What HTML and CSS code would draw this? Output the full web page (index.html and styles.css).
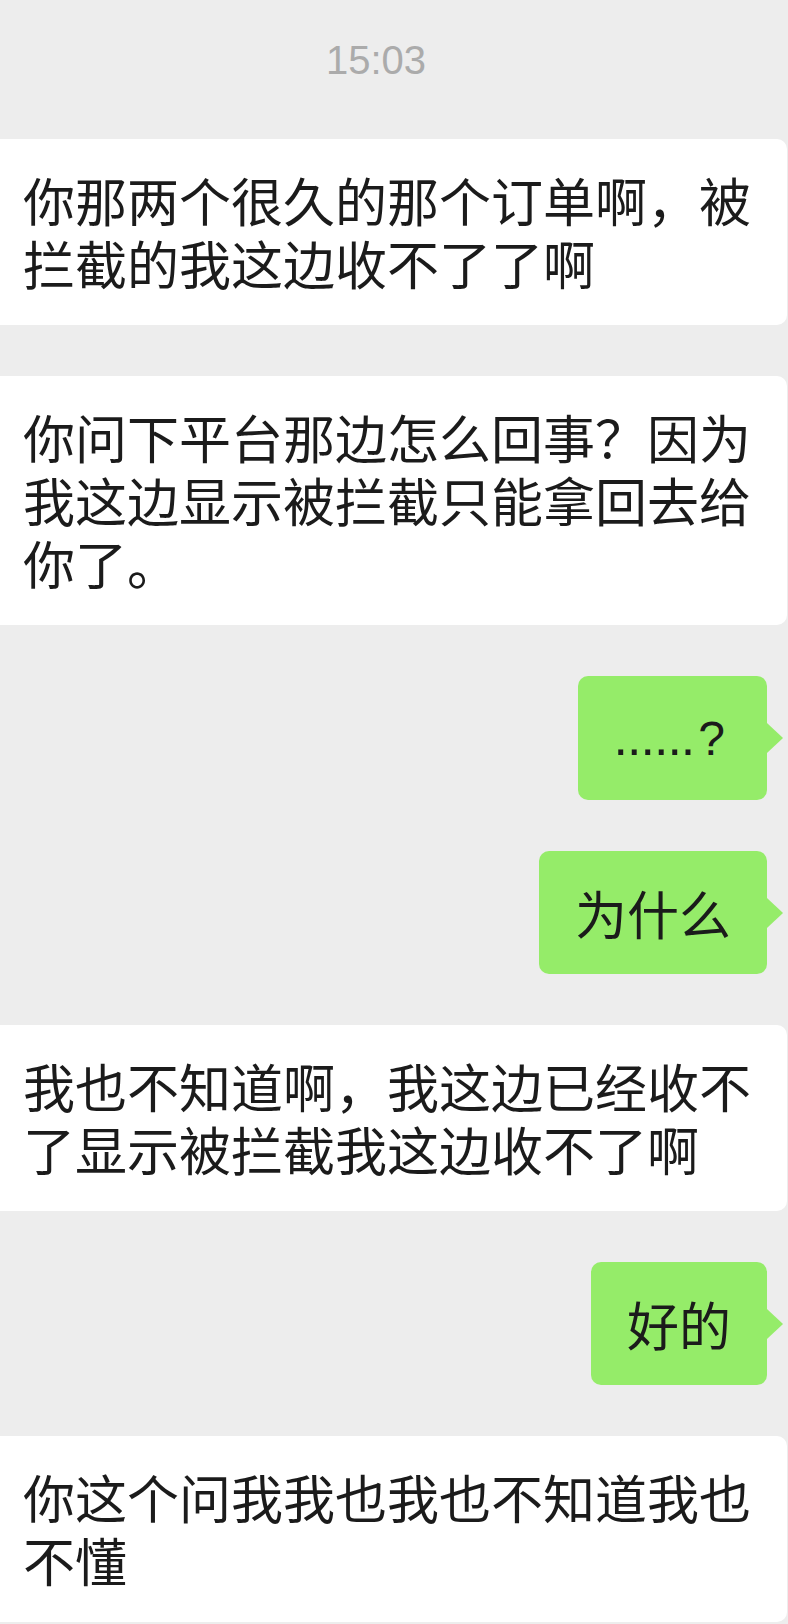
FILE: index.html
```html
<!DOCTYPE html>
<html lang="zh-CN">
<head>
<meta charset="utf-8">
<title>聊天</title>
<link rel="stylesheet" href="styles.css">
</head>
<body>
<div class="screen">
  <div class="time">15:03</div>
  <div class="chat">
    <div class="msg in">你那两个很久的那个订单啊，被拦截的我这边收不了了啊</div>
    <div class="msg in">你问下平台那边怎么回事？因为我这边显示被拦截只能拿回去给你了。</div>
    <div class="msg out dotsmsg"><span class="dots">......</span><span class="q">?</span></div>
    <div class="msg out">为什么</div>
    <div class="msg in">我也不知道啊，我这边已经收不了显示被拦截我这边收不了啊</div>
    <div class="msg out">好的</div>
    <div class="msg in">你这个问我我也我也不知道我也不懂</div>
  </div>
</div>
</body>
</html>
```

FILE: styles.css
```css
html, body {
  margin: 0;
  padding: 0;
  background: #ededed;
}

.screen {
  width: 788px;
  height: 1624px;
  overflow: hidden;
  font-family: "Noto Sans CJK SC", "Noto Sans", sans-serif;
  color: #1b1b1b;
}

.time {
  padding-top: 40px;
  padding-right: 36px;
  margin-bottom: 59px;
  text-align: center;
  font-family: "Liberation Sans", Arial, sans-serif;
  font-size: 40px;
  line-height: 40px;
  color: #ababab;
}

.chat {
  display: flex;
  flex-direction: column;
  gap: 51px;
}

.msg {
  font-size: 52px;
  line-height: 63px;
  padding: 30px 36px;
  box-sizing: border-box;
}

.msg.in {
  align-self: stretch;
  margin-right: 1px;
  background: #ffffff;
  border-radius: 0 10px 10px 0;
  padding: 29px 30px 31px 23px;
}

.msg.out {
  align-self: flex-end;
  margin-right: 21px;
  background: #95ec69;
  border-radius: 10px;
  position: relative;
}

.msg.out::after {
  content: "";
  position: absolute;
  left: 100%;
  top: 50%;
  margin-top: -15px;
  border-left: 16px solid #95ec69;
  border-top: 15px solid transparent;
  border-bottom: 15px solid transparent;
}

.msg.dotsmsg {
  padding-right: 42px;
  font-family: "Liberation Sans", Arial, sans-serif;
}

.dots {
  font-size: 52px;
  letter-spacing: -1px;
}

.q {
  font-size: 48px;
  margin-left: 4px;
}
```
